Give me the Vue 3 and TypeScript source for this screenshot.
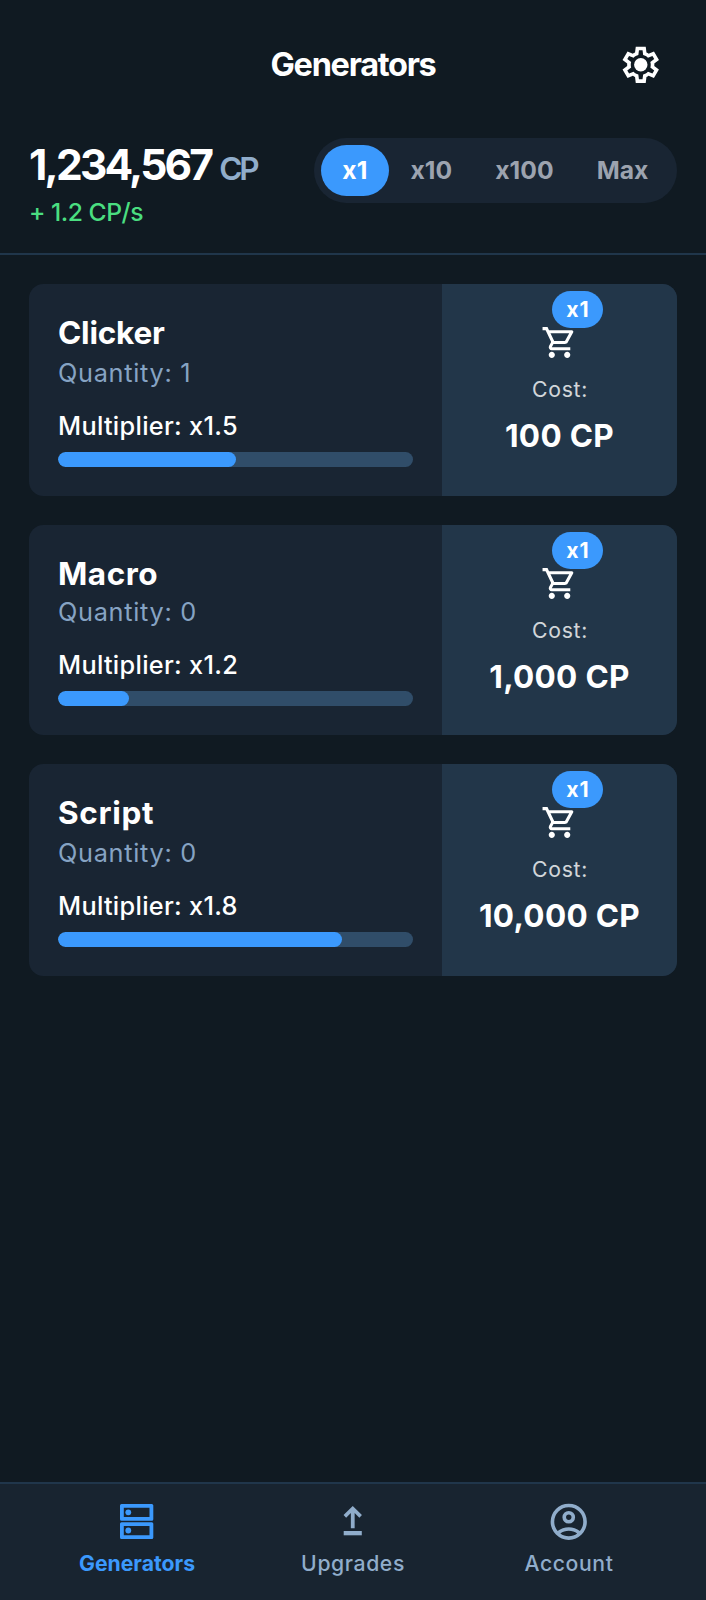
<script setup lang="ts">
import { ref } from 'vue'

interface Generator {
  name: string
  quantity: number
  multiplier: string
  progress: number
  cost: string
  tracking: number
}

const amounts = ['x1', 'x10', 'x100', 'Max']
const amount = ref('x1')

const generators: Generator[] = [
  { name: 'Clicker', quantity: 1, multiplier: 'x1.5', progress: 50, cost: '100 CP', tracking: -0.2 },
  { name: 'Macro', quantity: 0, multiplier: 'x1.2', progress: 20, cost: '1,000 CP', tracking: 0.5 },
  { name: 'Script', quantity: 0, multiplier: 'x1.8', progress: 80, cost: '10,000 CP', tracking: 0.7 },
]
</script>

<template>
  <div class="page">
    <header class="header">
      <h1 class="title">Generators</h1>
      <button class="settings" aria-label="Settings">
        <svg class="icon" viewBox="0 -960 960 960">
          <path d="m370-80-16-128q-13-5-24.5-12T307-235l-119 50L78-375l103-78q-1-7-1-13.5v-27q0-6.5 1-13.5L78-585l110-190 119 50q11-8 23-15t24-12l16-128h220l16 128q13 5 24.5 12t22.5 15l119-50 110 190-103 78q1 7 1 13.5v27q0 6.5-2 13.5l103 78-110 190-118-50q-11 8-23 15t-24 12L590-80H370Zm70-80h79l14-106q31-8 57.5-23.5T639-327l99 41 39-68-86-65q5-14 7-29.5t2-31.5q0-16-2-31.5t-7-29.5l86-65-39-68-99 42q-22-23-48.5-38.5T533-694l-13-106h-79l-14 106q-31 8-57.5 23.5T321-633l-99-41-39 68 86 64q-5 15-7 30t-2 32q0 16 2 31t7 30l-86 65 39 68 99-42q22 23 48.5 38.5T427-266l13 106Z" />
          <circle cx="481" cy="-480" r="148" />
        </svg>
      </button>
    </header>

    <section class="stats">
      <div>
        <div class="balance"><span class="number">1,234,567</span><span class="unit">CP</span></div>
        <div class="rate">+ 1.2 CP/s</div>
      </div>
      <div class="segments">
        <button
          v-for="a in amounts"
          :key="a"
          class="segment"
          :class="{ active: a === amount }"
          @click="amount = a"
        >{{ a }}</button>
      </div>
    </section>

    <main class="list">
      <article v-for="g in generators" :key="g.name" class="card">
        <div class="info">
          <h2 class="name" :style="{ letterSpacing: g.tracking + 'px' }">{{ g.name }}</h2>
          <p class="quantity">Quantity: {{ g.quantity }}</p>
          <p class="multiplier">Multiplier: {{ g.multiplier }}</p>
          <div class="track"><div class="fill" :style="{ width: g.progress + '%' }"></div></div>
        </div>
        <div class="buy">
          <div class="cart">
            <svg class="cart-icon" viewBox="0 -960 960 960">
              <path d="M280-80q-33 0-56.5-23.5T200-160q0-33 23.5-56.5T280-240q33 0 56.5 23.5T360-160q0 33-23.5 56.5T280-80Zm400 0q-33 0-56.5-23.5T600-160q0-33 23.5-56.5T680-240q33 0 56.5 23.5T760-160q0 33-23.5 56.5T680-80ZM246-720l96 200h280l110-200H246Zm-38-80h590q23 0 35 20.5t1 41.5L692-482q-11 20-29.5 31T622-440H324l-44 80h480v80H280q-45 0-68-39.5t-2-78.5l54-98-144-304H40v-80h130l38 80Z" />
            </svg>
            <span class="badge">{{ amount }}</span>
          </div>
          <span class="cost-label">Cost:</span>
          <span class="cost">{{ g.cost }}</span>
        </div>
      </article>
    </main>

    <nav class="nav">
      <a class="tab current">
        <svg class="icon" viewBox="0 0 43.5 43.5">
          <path fill-rule="evenodd" d="M6.5 4h30.300a1.500 1.500 0 0 1 1.500 1.500v13.700a1.500 1.500 0 0 1-1.500 1.500H6.500a1.500 1.500 0 0 1-1.500-1.500V5.500A1.500 1.500 0 0 1 6.500 4Zm2.300 3.700v9.300h25.700V7.700Z" />
          <path fill-rule="evenodd" d="M6.500 22.200h30.300a1.500 1.500 0 0 1 1.500 1.500v13.700a1.500 1.500 0 0 1-1.500 1.500H6.500a1.500 1.500 0 0 1-1.500-1.500V23.700a1.500 1.500 0 0 1 1.500-1.500Zm2.300 3.700v9.300h25.700v-9.300Z" />
          <circle cx="13.300" cy="12.350" r="2.900" />
          <circle cx="13.300" cy="30.500" r="2.900" />
        </svg>
        <span class="label">Generators</span>
      </a>
      <a class="tab">
        <svg class="icon" viewBox="0 0 43.5 43.5">
          <path d="M12.700 31h18.100v4.300H12.700Z" />
          <path d="M21.750 6l9.200 9.100-2.600 2.600-4.700-4.700v15.200h-3.800V13l-4.700 4.700-2.600-2.600Z" />
        </svg>
        <span class="label">Upgrades</span>
      </a>
      <a class="tab">
        <svg class="icon" viewBox="0 -960 960 960">
          <path d="M234-276q51-39 114-61.5T480-360q69 0 132 22.5T726-276q35-41 54.5-93T800-480q0-133-93.5-226.5T480-800q-133 0-226.5 93.5T160-480q0 59 19.5 111t54.5 93Zm246-164q-59 0-99.5-40.5T340-580q0-59 40.5-99.5T480-720q59 0 99.5 40.5T620-580q0 59-40.5 99.5T480-440Zm0 360q-83 0-156-31.5T197-197q-54-54-85.5-127T80-480q0-83 31.5-156T197-763q54-54 127-85.5T480-880q83 0 156 31.5T763-763q54 54 85.5 127T880-480q0 83-31.5 156T763-197q-54 54-127 85.5T480-80Zm0-80q53 0 100-15.5t86-44.5q-39-29-86-44.5T480-280q-53 0-100 15.5T294-220q39 29 86 44.5T480-160Zm0-360q26 0 43-17t17-43q0-26-17-43t-43-17q-26 0-43 17t-17 43q0 26 17 43t43 17Z" />
        </svg>
        <span class="label">Account</span>
      </a>
    </nav>
  </div>
</template>

<style>
body {
  background: #101a22;
}
</style>

<style scoped>
.page {
  display: flex;
  flex-direction: column;
  height: 1600px;
  background: #101a22;
  color: #fff;
  font-family: Inter, 'Liberation Sans', sans-serif;
}
h1, h2, p {
  margin: 0;
}
button {
  border: 0;
  margin: 0;
  background: none;
  color: inherit;
  font-family: inherit;
}
svg {
  display: block;
  fill: currentColor;
}
.icon {
  width: 43.5px;
  height: 43.5px;
}
.header {
  display: grid;
  grid-template-columns: 1fr auto 1fr;
  align-items: center;
  height: 130px;
  padding: 0 43.5px;
  box-sizing: border-box;
}
.title {
  grid-column: 2;
  font-size: 32.5px;
  font-weight: 700;
  line-height: 40px;
  letter-spacing: -1.3px;
}
.settings {
  justify-self: end;
  padding: 0;
}
.stats {
  display: flex;
  justify-content: space-between;
  align-items: flex-start;
  height: 125px;
  padding: 7.5px 29px 0;
  box-sizing: border-box;
  border-bottom: 2px solid #20364b;
}
.balance {
  height: 54px;
  line-height: 54px;
  white-space: nowrap;
}
.number {
  font-size: 42.5px;
  font-weight: 700;
  letter-spacing: -2.8px;
}
.unit {
  margin-left: 8px;
  color: #90adcb;
  font-size: 31.5px;
  font-weight: 600;
  letter-spacing: -3.2px;
}
.rate {
  color: #4ade80;
  font-size: 24.7px;
  font-weight: 500;
  line-height: 41px;
  letter-spacing: -0.5px;
}
.segments {
  display: flex;
  box-sizing: border-box;
  height: 65px;
  padding: 7px;
  border-radius: 33px;
  background: #192533;
}
.segment {
  padding: 0 21.6px;
  border-radius: 26px;
  color: #9ca3af;
  font-size: 24.7px;
  font-weight: 700;
  line-height: 51px;
}
.segment.active {
  background: #3b99fd;
  color: #fff;
}
.list {
  display: flex;
  flex: 1;
  flex-direction: column;
  gap: 29px;
  padding: 29px 29px 0;
}
.card {
  display: flex;
  height: 212px;
  overflow: hidden;
  border-radius: 14.5px;
  background: #192533;
}
.info {
  flex: 1;
  padding: 29px;
}
.name {
  font-size: 31.5px;
  font-weight: 700;
  line-height: 39px;
}
.quantity {
  margin-bottom: 14px;
  color: #86a3c3;
  font-size: 25.3px;
  font-weight: 400;
  line-height: 42px;
  letter-spacing: 0.7px;
}
.multiplier {
  margin-bottom: 8px;
  font-size: 25.3px;
  font-weight: 500;
  line-height: 36px;
  letter-spacing: 0.3px;
}
.card:nth-child(2) {
  height: 210px;
}
.card:nth-child(2) .quantity {
  margin-bottom: 16px;
  line-height: 38px;
}
.track {
  height: 15px;
  overflow: hidden;
  border-radius: 7.5px;
  background: #304d69;
}
.fill {
  height: 100%;
  border-radius: 7.5px;
  background: #3b99fd;
}
.buy {
  display: flex;
  flex-direction: column;
  align-items: center;
  width: 235px;
  padding-top: 40px;
  background: #223649;
}
.cart {
  position: relative;
}
.cart-icon {
  width: 37px;
  height: 37px;
}
.badge {
  position: absolute;
  top: -33px;
  left: 11px;
  width: 51px;
  border-radius: 18.5px;
  background: #3b99fd;
  font-size: 21.2px;
  font-weight: 700;
  line-height: 37px;
  text-indent: 1px;
  letter-spacing: 1px;
  text-align: center;
}
.cost-label {
  margin: 14px 0;
  opacity: 0.8;
  font-size: 21.2px;
  line-height: 28px;
  text-indent: 1px;
  letter-spacing: 0.7px;
}
.cost {
  font-size: 31.5px;
  font-weight: 700;
  line-height: 38px;
  letter-spacing: 0.3px;
}
.nav {
  display: flex;
  box-sizing: border-box;
  height: 118px;
  padding: 15.5px 29px 0;
  border-top: 2px solid #20364b;
  background: #182430;
}
.tab {
  display: flex;
  flex: 1;
  flex-direction: column;
  align-items: center;
  gap: 6px;
  color: #90adcb;
}
.label {
  font-size: 21.2px;
  font-weight: 500;
  line-height: 28px;
  letter-spacing: 0.6px;
}
.current {
  color: #3b99fd;
}
.current .label {
  font-weight: 700;
  letter-spacing: 0;
}
</style>
